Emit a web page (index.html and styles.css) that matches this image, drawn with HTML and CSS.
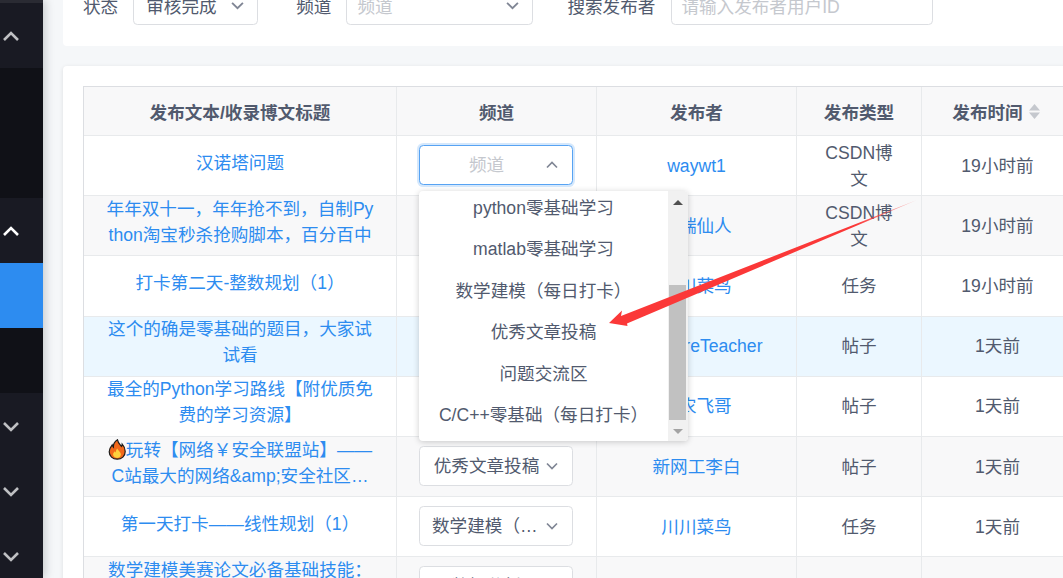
FILE: index.html
```html
<!DOCTYPE html>
<html lang="zh-CN">
<head>
<meta charset="utf-8">
<title>内容管理</title>
<link rel="stylesheet" href="styles.css">
</head>
<body>
<div class="app">
  <aside class="sidebar">
    <div class="sb sb-h68 sb-top"><svg class="chev" viewBox="0 0 18 12"><path d="M2 10 9 3l7 7"/></svg></div>
    <div class="sb sb-h130 sb-sub"></div>
    <div class="sb sb-h65 sb-active-head"><svg class="chev white" viewBox="0 0 18 12"><path d="M2 10 9 3l7 7"/></svg></div>
    <div class="sb sb-h65 sb-blue"></div>
    <div class="sb sb-h65 sb-sub"></div>
    <div class="sb sb-h65 sb-head"><svg class="chev" viewBox="0 0 18 12"><path d="M2 3l7 7 7-7"/></svg></div>
    <div class="sb sb-h65 sb-head"><svg class="chev" viewBox="0 0 18 12"><path d="M2 3l7 7 7-7"/></svg></div>
    <div class="sb sb-h65 sb-head"><svg class="chev" viewBox="0 0 18 12"><path d="M2 3l7 7 7-7"/></svg></div>
  </aside>
  <main class="main">
    <section class="card filter">
      <label class="flabel">状态</label>
      <div class="sel sel-status"><span class="sel-text">审核完成</span><svg class="sel-arrow" viewBox="0 0 12 8"><path d="M1 1.5 6 6.5l5-5"/></svg></div>
      <label class="flabel l2">频道</label>
      <div class="sel sel-channel"><span class="sel-text ph">频道</span><svg class="sel-arrow" viewBox="0 0 12 8"><path d="M1 1.5 6 6.5l5-5"/></svg></div>
      <label class="flabel l3">搜索发布者</label>
      <div class="inp">请输入发布者用户ID</div>
    </section>
    <section class="card tablecard">
      <table class="tbl">
        <colgroup><col class="c1"><col class="c2"><col class="c3"><col class="c4"><col class="c5"></colgroup>
        <thead>
          <tr>
            <th>发布文本/收录博文标题</th>
            <th>频道</th>
            <th>发布者</th>
            <th>发布类型</th>
            <th><span class="sorth">发布时间<svg class="sort" viewBox="0 0 11 15"><path d="M5.5 0 11 6.5H0z"/><path d="M0 8.500h11L5.500 15z"/></svg></span></th>
          </tr>
        </thead>
        <tbody>
          <tr>
            <td><a class="title single">汉诺塔问题</a></td>
            <td><div class="cs open"><span class="cs-text ph">频道</span><svg class="cs-arrow" viewBox="0 0 12 8"><path d="M1 6.5 6 1.5l5 5"/></svg></div></td>
            <td><a class="user">waywt1</a></td><td>CSDN博文</td><td>19小时前</td>
          </tr>
          <tr class="alt">
            <td><a class="title">年年双十一，年年抢不到，自制Python淘宝秒杀抢购脚本，百分百中</a></td>
            <td><div class="cs"><span class="cs-text">优秀文章投稿</span><svg class="cs-arrow" viewBox="0 0 12 8"><path d="M1 1.5 6 6.5l5-5"/></svg></div></td>
            <td><a class="user">云端仙人</a></td><td>CSDN博文</td><td>19小时前</td>
          </tr>
          <tr>
            <td><a class="title single">打卡第二天-整数规划（1）</a></td>
            <td><div class="cs"><span class="cs-text">数学建模（每日打卡）</span><svg class="cs-arrow" viewBox="0 0 12 8"><path d="M1 1.5 6 6.5l5-5"/></svg></div></td>
            <td><a class="user">川川菜鸟</a></td><td>任务</td><td>19小时前</td>
          </tr>
          <tr class="hover">
            <td><a class="title">这个的确是零基础的题目，大家试试看</a></td>
            <td><div class="cs"><span class="cs-text">问题交流区</span><svg class="cs-arrow" viewBox="0 0 12 8"><path d="M1 1.5 6 6.5l5-5"/></svg></div></td>
            <td><a class="user">SoftwareTeacher</a></td><td>帖子</td><td>1天前</td>
          </tr>
          <tr>
            <td><a class="title">最全的Python学习路线【附优质免费的学习资源】</a></td>
            <td><div class="cs"><span class="cs-text">优秀文章投稿</span><svg class="cs-arrow" viewBox="0 0 12 8"><path d="M1 1.5 6 6.5l5-5"/></svg></div></td>
            <td><a class="user">码农飞哥</a></td><td>帖子</td><td>1天前</td>
          </tr>
          <tr class="alt">
            <td><a class="title"><svg class="flame" viewBox="0 0 18 21"><path class="fl-o" d="M9.5.8c.6 3.2 2.4 4.4 4 6.6.5-.7.7-1.4.7-2.3 1.900 2 3 4.600 3 7.400 0 4.600-3.500 7.700-8 7.700s-8-3.100-8-7.500c0-3 1.500-4.900 3-6.800.3 1 .6 1.700 1.200 2.300C5.200 5.500 6.800 2.500 9.500.8z"/><path class="fl-y" d="M9.300 9.500c.4 1.800 3.600 3.300 3.600 6 0 2-1.700 3.400-3.900 3.400s-3.900-1.400-3.900-3.300c0-1.500.9-2.500 1.800-3.300.2.600.4.900.8 1.200.1-1.500.7-3 1.600-4z"/></svg>玩转【网络￥安全联盟站】——C站最大的网络&amp;amp;安全社区，一起来学习交流吧</a></td>
            <td><div class="cs"><span class="cs-text">优秀文章投稿</span><svg class="cs-arrow" viewBox="0 0 12 8"><path d="M1 1.5 6 6.5l5-5"/></svg></div></td>
            <td><a class="user">新网工李白</a></td><td>帖子</td><td>1天前</td>
          </tr>
          <tr>
            <td><a class="title single">第一天打卡——线性规划（1）</a></td>
            <td><div class="cs"><span class="cs-text">数学建模（每日打卡）</span><svg class="cs-arrow" viewBox="0 0 12 8"><path d="M1 1.5 6 6.5l5-5"/></svg></div></td>
            <td><a class="user">川川菜鸟</a></td><td>任务</td><td>1天前</td>
          </tr>
          <tr class="alt">
            <td><a class="title">数学建模美赛论文必备基础技能：论文写作与排版</a></td>
            <td><div class="cs"><span class="cs-text">数据分析</span><svg class="cs-arrow" viewBox="0 0 12 8"><path d="M1 1.5 6 6.5l5-5"/></svg></div></td>
            <td><a class="user">花小花的花小花</a></td><td>帖子</td><td>1天前</td>
          </tr>
        </tbody>
      </table>
    </section>
  </main>
</div>

<div class="dropdown">
  <ul class="dd-list">
    <li>python零基础学习</li>
    <li>matlab零基础学习</li>
    <li>数学建模（每日打卡）</li>
    <li>优秀文章投稿</li>
    <li>问题交流区</li>
    <li>C/C++零基础（每日打卡）</li>
  </ul>
  <div class="dd-bar">
    <svg class="dd-up" viewBox="0 0 10 5"><path d="M5 0l5 5H0z"/></svg>
    <div class="dd-thumb"></div>
    <svg class="dd-down" viewBox="0 0 10 5"><path d="M0 0h10L5 5z"/></svg>
  </div>
</div>

<svg class="annot" viewBox="0 0 1063 578">
  <defs>
    <linearGradient id="fade" gradientUnits="userSpaceOnUse" x1="609" y1="323" x2="917" y2="200">
      <stop offset="0.8" stop-color="#fb3838"/>
      <stop offset="1" stop-color="#fb3838" stop-opacity="0.25"/>
    </linearGradient>
  </defs>
  <path fill="url(#fade)" d="M609 323 622 310.500 621 316 917 200 627 323.500 627.500 326z"/>
</svg>
</body>
</html>
```

FILE: styles.css
```css
* { box-sizing: border-box; }
html, body { margin: 0; height: 100%; overflow: hidden; }
body {
  font-family: "Liberation Sans", "Noto Sans CJK SC", sans-serif;
  font-size: 17.6px;
  color: #515a6e;
  background: #f5f7f9;
}
.app { display: flex; height: 578px; overflow: hidden; }

.sidebar {
  width: 43px;
  flex: none;
  background: #191a23;
  box-shadow: 2px 0 9px rgba(29, 35, 41, .22);
  position: relative;
  z-index: 2;
}
.sb { display: flex; align-items: center; justify-content: flex-start; padding-left: 2px; }
.sb-h68 { height: 68px; }
.sb-h130 { height: 130px; }
.sb-h65 { height: 65px; }
.sb-top { background: #191a23; border-top: 3px solid #2a2b33; }
.sb-sub { background: #101117; }
.sb-active-head { background: #191a23; }
.sb-blue { background: #2d8cf0; }
.sb-head { background: #191a23; }
.chev { width: 18px; height: 12px; fill: none; stroke: #bfc0c3; stroke-width: 2.600; }
.chev.white { stroke: #fff; }

.main { flex: 1; min-width: 0; padding-left: 20px; overflow: hidden; }

.card {
  width: 1032px;
  background: #fff;
  border-radius: 4px;
  box-shadow: 0 1px 4px rgba(0, 0, 0, .1);
  padding: 20px;
}
.filter {
  display: flex;
  align-items: center;
  margin-top: -30px;
  height: 76px;
  padding: 15px 20px 21px;
  box-shadow: none;
}
.flabel { flex: none; margin-right: 15px; }
.l2 { margin-left: 38px; margin-right: 15px; }
.l3 { margin-left: 34px; margin-right: 16px; }
.sel, .inp {
  height: 40px;
  flex: none;
  border: 1px solid #dcdee2;
  border-radius: 4.400px;
  background: #fff;
  display: flex;
  align-items: center;
  padding: 0 12px;
}
.sel-status { width: 125px; }
.sel-channel { width: 187px; padding-left: 10px; }
.inp { width: 262px; color: #c5c8ce; padding-left: 9px; }
.sel-text { flex: 1; }
.ph { color: #c5c8ce; }
.sel-arrow { width: 13px; height: 9px; flex: none; fill: none; stroke: #808695; stroke-width: 1.700; margin-right: 1px; }

.tablecard { margin-top: 20px; height: 600px; }

.tbl {
  width: 990px;
  table-layout: fixed;
  border-collapse: separate;
  border-spacing: 0;
  border-top: 1px solid #dcdee2;
  border-left: 1px solid #dcdee2;
  text-align: center;
}
.c1 { width: 313px; }
.c2, .c3 { width: 200px; }
.c4 { width: 125px; }
.c5 { width: 152px; }
.tbl th {
  height: 49px;
  padding: 0;
  background: #f8f8f9;
  font-weight: 700;
  border-right: 1px solid #e8eaec;
  border-bottom: 1px solid #e8eaec;
}
.tbl td {
  height: 60.200px;
  padding: 0 22px;
  line-height: 26px;
  background: #fff;
  border-right: 1px solid #e8eaec;
  border-bottom: 1px solid #e8eaec;
  word-break: break-all;
}
.tbl tr.alt td { background: #f8f8f9; }
.tbl tr.hover td { background: #ebf7ff; }
.title, .user { color: #2d8cf0; }
.title {
  display: -webkit-box;
  -webkit-box-orient: vertical;
  -webkit-line-clamp: 2;
  overflow: hidden;
  margin: -1px 0 7px;
}
.title.single { margin: 0 0 5px; }
.user { white-space: nowrap; }
.sorth { display: inline-flex; align-items: center; gap: 6px; white-space: nowrap; padding-right: 3px; }
.sort { width: 11px; height: 15px; fill: #c5c8ce; flex: none; }
.flame { width: 18px; height: 21px; vertical-align: -4px; }
.fl-o { fill: #f2681a; stroke: #1c1c1c; stroke-width: 1.200; }
.fl-y { fill: #fdd23d; }

.cs {
  height: 40px;
  margin: -2px 1px 0 0;
  display: flex;
  align-items: center;
  border: 1px solid #dcdee2;
  border-radius: 4.400px;
  background: #fff;
  padding: 0 14px 0 12px;
}
.cs.open { border-color: #57a3f3; box-shadow: 0 0 0 2px rgba(45, 140, 240, .2); }
.cs-text {
  flex: 1;
  min-width: 0;
  text-align: center;
  white-space: nowrap;
  overflow: hidden;
  text-overflow: ellipsis;
  margin-right: 5px;
}
.cs-arrow { width: 12px; height: 8px; flex: none; fill: none; stroke: #808695; stroke-width: 1.700; }

.dropdown {
  position: absolute;
  left: 419px;
  top: 191px;
  width: 269px;
  height: 250px;
  display: flex;
  background: #fff;
  border-radius: 4px;
  box-shadow: 0 1px 6px rgba(0, 0, 0, .2);
  overflow: hidden;
  z-index: 3;
}
.dd-list {
  flex: 1;
  list-style: none;
  margin: -3px 0 0;
  padding: 0;
  text-align: center;
  white-space: nowrap;
}
.dd-list li { height: 41.400px; line-height: 41.400px; }
.dd-bar {
  width: 20px;
  flex: none;
  background: #f1f1f1;
  display: flex;
  flex-direction: column;
  align-items: center;
  padding: 9px 2px 0 1px;
}
.dd-up, .dd-down { width: 10px; height: 5px; flex: none; }
.dd-up { fill: #505050; }
.dd-down { fill: #a3a3a3; margin-top: 9px; }
.dd-thumb { width: 17px; height: 135px; flex: none; margin-top: 80px; background: #c1c1c1; }

.annot {
  position: absolute;
  left: 0;
  top: 0;
  width: 1063px;
  height: 578px;
  pointer-events: none;
  z-index: 4;
}
```
